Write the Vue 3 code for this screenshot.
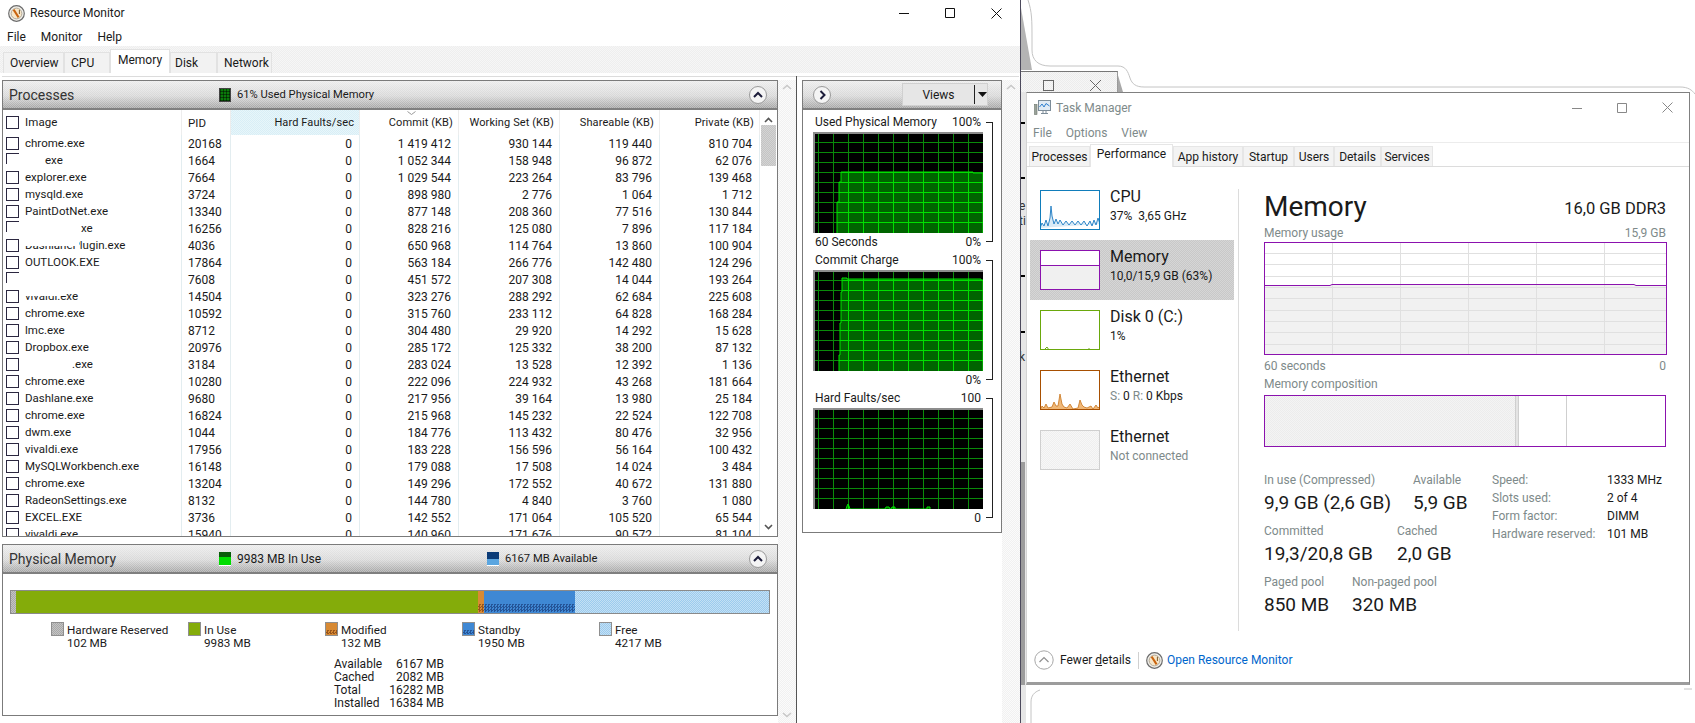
<script setup>
const rows = [
  ['chrome.exe', '20168', '1 419 412', '930 144', '119 440', '810 704'],
  ['exe', '1664', '1 052 344', '158 948', '96 872', '62 076', 20, true],
  ['explorer.exe', '7664', '1 029 544', '223 264', '83 796', '139 468'],
  ['mysqld.exe', '3724', '898 980', '2 776', '1 064', '1 712'],
  ['PaintDotNet.exe', '13340', '877 148', '208 360', '77 516', '130 844'],
  ['xe', '16256', '828 216', '125 080', '7 896', '117 184', 56, true],
  ['DashlanePlugin.exe', '4036', '650 968', '114 764', '13 860', '100 904', 0, false, 'mask-top'],
  ['OUTLOOK.EXE', '17864', '563 184', '266 776', '142 480', '124 296'],
  ['', '7608', '451 572', '207 308', '14 044', '193 264', 0, true],
  ['vivaldi.exe', '14504', '323 276', '288 292', '62 684', '225 608', 0, false, 'mask-top short'],
  ['chrome.exe', '10592', '315 760', '233 112', '64 828', '168 284'],
  ['lmc.exe', '8712', '304 480', '29 920', '14 292', '15 628'],
  ['Dropbox.exe', '20976', '285 172', '125 332', '38 200', '87 132', 0, false, 'mask-bottom'],
  ['.exe', '3184', '283 024', '13 528', '12 392', '1 136', 47],
  ['chrome.exe', '10280', '222 096', '224 932', '43 268', '181 664'],
  ['Dashlane.exe', '9680', '217 956', '39 164', '13 980', '25 184'],
  ['chrome.exe', '16824', '215 968', '145 232', '22 524', '122 708'],
  ['dwm.exe', '1044', '184 776', '113 432', '80 476', '32 956'],
  ['vivaldi.exe', '17956', '183 228', '156 596', '56 164', '100 432'],
  ['MySQLWorkbench.exe', '16148', '179 088', '17 508', '14 024', '3 484'],
  ['chrome.exe', '13204', '149 296', '172 552', '40 672', '131 880'],
  ['RadeonSettings.exe', '8132', '144 780', '4 840', '3 760', '1 080'],
  ['EXCEL.EXE', '3736', '142 552', '171 064', '105 520', '65 544'],
  ['vivaldi.exe', '15940', '140 960', '171 676', '90 572', '81 104']
]

const barParts = [
  { cls: 'seg-hw', w: 5 },
  { cls: 'seg-use', w: 462 },
  { cls: 'seg-mod', w: 6 },
  { cls: 'seg-stby', w: 90.5 },
  { cls: 'seg-free', w: 194.5 }
]

const legend = [
  { cls: 'seg-hw', name: 'Hardware Reserved', val: '102 MB' },
  { cls: 'seg-use', name: 'In Use', val: '9983 MB' },
  { cls: 'seg-mod', name: 'Modified', val: '132 MB' },
  { cls: 'seg-stby', name: 'Standby', val: '1950 MB' },
  { cls: 'seg-free', name: 'Free', val: '4217 MB' }
]

const memTotals = [
  ['Available', '6167 MB'],
  ['Cached', '2082 MB'],
  ['Total', '16282 MB'],
  ['Installed', '16384 MB']
]

const graphs = [
  { id: 'g1', title: 'Used Physical Memory', top: '100%', left: '60 Seconds', bottom: '0%',
    shape: '24,101 24,70 26,70 26,50 28,50 28,40 160,40 160,41 170,41 170,101' },
  { id: 'g2', title: 'Commit Charge', top: '100%', left: '', bottom: '0%',
    shape: '26,101 26,85 27,85 27,53 28,53 28,22 29,22 29,8 34,8 34,9 168,9 168,10 170,10 170,101' },
  { id: 'g3', title: 'Hard Faults/sec', top: '100', left: '', bottom: '0',
    shape: '33,101 34,98 35,96 36,98 37,101 72,101 73,99 76,99 77,101 78,101 79,99 82,99 82,101 114,101 114,99 117,99 117,101' }
]
const vLines = [5, 20, 35, 50, 65, 80, 95, 110, 125, 140, 155]
const hLines = [10, 20, 30, 40, 50, 60, 70, 80, 90]

const sidebar = [
  { name: 'CPU', sub: '37%  3,65 GHz', kind: 'cpu' },
  { name: 'Memory', sub: '10,0/15,9 GB (63%)', kind: 'mem', active: true },
  { name: 'Disk 0 (C:)', sub: '1%', kind: 'disk' },
  { name: 'Ethernet', sub: '', kind: 'net' },
  { name: 'Ethernet', sub: 'Not connected', kind: 'off', muted: true }
]
const cpuLine = '0,38 2,33 4,36 6,30 8,36 10,28 11,16 12,26 14,34 16,29 18,34 20,30 23,35 26,31 29,35 32,31 35,35 38,31 41,35 44,31 47,36 50,31 52,36 54,30 56,35 58,28 60,34'
const netLine = '0,40 2,36 4,38 6,34 8,38 12,37 14,32 16,36 18,36 20,24 22,34 24,37 27,38 30,34 33,39 38,38 40,30 42,35 44,37 47,38 51,36 53,39 56,35 58,38 60,36 60,40'
const tmV = [68, 136, 204, 272, 340]
const tmH = [11, 22, 34, 45, 56, 68, 79, 90, 102]

const stats = [
  [{ c: 'w149', k: 'In use (Compressed)', v: '9,9 GB (2,6 GB)' }, { c: '', k: 'Available', v: '5,9 GB' }],
  [{ c: 'w133', k: 'Committed', v: '19,3/20,8 GB' }, { c: '', k: 'Cached', v: '2,0 GB' }],
  [{ c: 'w88', k: 'Paged pool', v: '850 MB' }, { c: '', k: 'Non-paged pool', v: '320 MB' }]
]
const specs = [
  ['Speed:', '1333 MHz'],
  ['Slots used:', '2 of 4'],
  ['Form factor:', 'DIMM'],
  ['Hardware reserved:', '101 MB']
]
</script>

<template>
  <div class="desk">
    <!-- windows lying behind the two main ones -->
    <svg class="behind" width="675" height="723" viewBox="0 0 675 723" fill="none" stroke="#c4c4c4">
      <path d="M1 8 L12 70 L1 70Z" fill="#b4b4b4" stroke="none" />
      <path d="M97 72 L103 92 L97 92Z" fill="#a8a8a8" stroke="none" />
      <path d="M8 0 C12 12 12 20 12 40 L12 50 C12 60 18 66 30 66 L98 66 C106 66 108 72 110 78 C112 84 116 87 124 87 L660 87 C668 87 672 90 675 94" />
      <path d="M11 723 L11 702 C11 696 14 692 20 690" />
      <path d="M664 689 L672 689" />
    </svg>
    <div class="back-win">
      <span class="back-max"></span>
      <svg width="11" height="11" viewBox="0 0 11 11" stroke="#666" fill="none"><path d="M0 0 11 11M11 0 0 11" /></svg>
    </div>
    <div class="edge">
      <i class="tick t1"></i><i class="tick t2"></i><i class="tick t3"></i><i class="tick t4"></i>
      <span class="ch c1">e</span><span class="ch c2">ti</span><span class="ch c3">k</span>
      <div class="edge-low"></div>
    </div>

    <!-- Resource Monitor -->
    <section class="rm">
      <header class="rm-title">
        <svg class="rm-icon" width="17" height="17" viewBox="0 0 17 17">
          <circle cx="8.5" cy="8.5" r="7.8" fill="#f3f1ec" stroke="#6c6c6c" stroke-width="1.2" />
          <circle cx="8.5" cy="8.5" r="5.4" fill="#f7e6c8" stroke="#b0a898" />
          <path d="M5.6 4.6 10.6 12.4" stroke="#c9630e" stroke-width="2" />
          <path d="M11.4 4.8V9" stroke="#7d5a2a" />
        </svg>
        <span>Resource Monitor</span>
        <div class="win-btns">
          <svg width="10" height="10" viewBox="0 0 10 10" stroke="#111"><path d="M0 5.5H10" /></svg>
          <svg width="10" height="10" viewBox="0 0 10 10" stroke="#111" fill="none"><path d="M.5.5h9v9h-9z" /></svg>
          <svg width="11" height="11" viewBox="0 0 11 11" stroke="#111"><path d="M.5.5 10.5 10.5M10.5.5.5 10.5" /></svg>
        </div>
      </header>
      <nav class="rm-menu">
        <span>File</span><span>Monitor</span><span>Help</span>
      </nav>
      <div class="rm-tabs">
        <span class="rt t-over">Overview</span>
        <span class="rt t-cpu">CPU</span>
        <span class="rt t-mem">Memory</span>
        <span class="rt t-disk">Disk</span>
        <span class="rt t-net">Network</span>
      </div>
      <div class="rm-gap"></div>

      <div class="rm-body">
        <div class="left-col">
          <div class="panel proc">
            <div class="ph">
              <span class="ph-title">Processes</span>
              <i class="chip chip-dark"></i>
              <span class="ph-note">61% Used Physical Memory</span>
              <span class="roundbtn"><svg width="10" height="7" viewBox="0 0 10 7" fill="none" stroke="#1c1c3a" stroke-width="2"><path d="M1 6 5 2 9 6" /></svg></span>
            </div>
            <div class="proc-wrap">
              <div class="proc-table">
                <div class="pr head">
                  <div class="c-img"><i class="cb"></i><span>Image</span></div>
                  <div class="c-pid">PID</div>
                  <div class="c-num c-hf">Hard Faults/sec</div>
                  <div class="c-num c-sort">Commit (KB)<svg class="sort" width="9" height="4" viewBox="0 0 9 4" fill="none" stroke="#999"><path d="M.5.5 4.5 3.5 8.5.5" /></svg></div>
                  <div class="c-num">Working Set (KB)</div>
                  <div class="c-num">Shareable (KB)</div>
                  <div class="c-num">Private (KB)</div>
                </div>
                <div v-for="(r, i) in rows" :key="i" class="pr">
                  <div class="c-img">
                    <i class="cb" :class="{ cut: r[7] }"></i>
                    <span :style="{ paddingLeft: (r[6] || 0) + 'px' }">{{ r[0] }}</span>
                    <i v-if="r[8]" class="mask" :class="r[8]"></i>
                  </div>
                  <div class="c-pid">{{ r[1] }}</div>
                  <div class="c-num c-val">0</div>
                  <div class="c-num c-val">{{ r[2] }}</div>
                  <div class="c-num c-val">{{ r[3] }}</div>
                  <div class="c-num c-val">{{ r[4] }}</div>
                  <div class="c-num c-val">{{ r[5] }}</div>
                </div>
              </div>
              <div class="sb">
                <svg width="9" height="6" viewBox="0 0 9 6" fill="none" stroke="#555" stroke-width="1.6"><path d="M1 5 4.5 1.5 8 5" /></svg>
                <div class="sb-thumb"></div>
                <svg class="sb-down" width="9" height="6" viewBox="0 0 9 6" fill="none" stroke="#555" stroke-width="1.6"><path d="M1 1 4.5 4.5 8 1" /></svg>
              </div>
            </div>
          </div>

          <div class="panel phys">
            <div class="ph">
              <span class="ph-title">Physical Memory</span>
              <i class="chip chip-use"></i>
              <span class="ph-note n-use">9983 MB In Use</span>
              <i class="chip chip-avail"></i>
              <span class="ph-note">6167 MB Available</span>
              <span class="roundbtn"><svg width="10" height="7" viewBox="0 0 10 7" fill="none" stroke="#1c1c3a" stroke-width="2"><path d="M1 6 5 2 9 6" /></svg></span>
            </div>
            <div class="mbar">
              <div v-for="p in barParts" :key="p.cls" :class="p.cls" :style="{ width: p.w + 'px' }"></div>
            </div>
            <div class="mlegend">
              <div v-for="l in legend" :key="l.name" class="leg">
                <i class="swatch" :class="l.cls"></i>
                <div class="leg-text"><div>{{ l.name }}</div><div>{{ l.val }}</div></div>
              </div>
            </div>
            <div class="mtotals">
              <template v-for="t in memTotals" :key="t[0]">
                <span>{{ t[0] }}</span><span class="tv">{{ t[1] }}</span>
              </template>
            </div>
          </div>
        </div>

        <div class="vscroll">
          <svg width="10" height="6" viewBox="0 0 10 6" fill="none" stroke="#c8c8c8" stroke-width="1.6"><path d="M1 5 5 1.5 9 5" /></svg>
          <svg class="vs-down" width="10" height="6" viewBox="0 0 10 6" fill="none" stroke="#c8c8c8" stroke-width="1.6"><path d="M1 1 5 4.5 9 1" /></svg>
        </div>
        <div class="splitter"></div>

        <div class="right-col">
          <div class="panel graphs">
            <div class="ph ph-right">
              <span class="roundbtn rb-left"><svg width="7" height="10" viewBox="0 0 7 10" fill="none" stroke="#1c1c3a" stroke-width="2"><path d="M1.5 1 5.5 5 1.5 9" /></svg></span>
              <div class="views">
                <span class="views-text">Views</span>
                <i class="views-sep"></i>
                <svg width="9" height="5" viewBox="0 0 9 5" fill="#111"><path d="M0 0H9L4.5 5Z" /></svg>
              </div>
            </div>
            <div class="graph-list">
              <div v-for="g in graphs" :key="g.id" class="gsec">
                <div class="gcol">
                  <div class="gline"><span>{{ g.title }}</span><span>{{ g.top }}</span></div>
                  <svg class="plot" width="170" height="101" viewBox="0 0 170 101">
                    <defs>
                      <clipPath :id="g.id"><polygon :points="g.shape" /></clipPath>
                    </defs>
                    <rect width="170" height="101" fill="#000" />
                    <g stroke="#0a8a0a">
                      <path v-for="x in vLines" :key="x" :d="`M${x + 0.5} 0V101`" />
                      <path v-for="y in hLines" :key="y" :d="`M0 ${y + 0.5}H170`" />
                    </g>
                    <polygon :points="g.shape" fill="#006400" />
                    <g stroke="#00e000" :clip-path="`url(#${g.id})`">
                      <path v-for="x in vLines" :key="x" :d="`M${x + 0.5} 0V101`" />
                      <path v-for="y in hLines" :key="y" :d="`M0 ${y + 0.5}H170`" />
                    </g>
                    <polyline :points="g.shape" fill="none" stroke="#00e000" />
                    <path d="M1 101V1H170" fill="none" stroke="#8c8c8c" stroke-width="2" />
                  </svg>
                  <div class="gline"><span>{{ g.left }}</span><span>{{ g.bottom }}</span></div>
                </div>
                <i class="bracket"></i>
              </div>
            </div>
          </div>
        </div>
        <div class="vscroll narrow">
          <svg width="10" height="6" viewBox="0 0 10 6" fill="none" stroke="#c8c8c8" stroke-width="1.6"><path d="M1 5 5 1.5 9 5" /></svg>
        </div>
      </div>
    </section>

    <!-- Task Manager -->
    <section class="tm">
      <header class="tm-title">
        <svg width="17" height="16" viewBox="0 0 17 16">
          <rect x="4.5" y=".5" width="12" height="10" fill="#dfeaf4" stroke="#7c8c98" />
          <path d="M5.5 7 8 4 10 7 12 3.5 15.5 6" fill="none" stroke="#2d7fd0" />
          <rect x=".5" y="4.5" width="2.5" height="10" fill="#9aa39a" stroke="#6b746b" stroke-width=".6" />
          <path d="M7 13.5H14M9 11V13.5M12 11V13.5" stroke="#7c8c98" />
        </svg>
        <span>Task Manager</span>
        <div class="win-btns tm-btns">
          <svg width="10" height="10" viewBox="0 0 10 10" stroke="#888"><path d="M0 5.5H10" /></svg>
          <svg width="10" height="10" viewBox="0 0 10 10" stroke="#888" fill="none"><path d="M.5.5h9v9h-9z" /></svg>
          <svg width="11" height="11" viewBox="0 0 11 11" stroke="#888"><path d="M.5.5 10.5 10.5M10.5.5.5 10.5" /></svg>
        </div>
      </header>
      <nav class="tm-menu"><span>File</span><span>Options</span><span>View</span></nav>
      <div class="tm-tabs">
        <span class="tt">Processes</span>
        <span class="tt tt-on">Performance</span>
        <span class="tt">App history</span>
        <span class="tt">Startup</span>
        <span class="tt">Users</span>
        <span class="tt">Details</span>
        <span class="tt">Services</span>
      </div>

      <div class="tm-body">
        <aside class="side">
          <div v-for="(s, i) in sidebar" :key="i" class="side-item" :class="{ on: s.active }">
            <svg class="thumb" :class="'th-' + s.kind" width="60" height="40" viewBox="0 0 60 40">
              <polyline v-if="s.kind === 'cpu'" :points="cpuLine" fill="#d9eaf6" stroke="#2f86c8" />
              <g v-if="s.kind === 'mem'">
                <rect y="15" width="60" height="25" fill="#f0f0f0" />
                <path d="M0 15.5H60" stroke="#8b12ae" />
              </g>
              <path v-if="s.kind === 'disk'" d="M4 40 7 37 9 40M48 39H50" stroke="#6aa820" fill="none" />
              <polygon v-if="s.kind === 'net'" :points="netLine" fill="#f0b878" stroke="#c8741c" stroke-width=".8" />
            </svg>
            <div class="side-text" :class="{ muted: s.muted }">
              <div class="side-name">{{ s.name }}</div>
              <div v-if="s.kind === 'net'" class="side-sub">
                <span class="lbl">S:</span> 0 <span class="lbl">R:</span> 0 Kbps
              </div>
              <div v-else class="side-sub">{{ s.sub }}</div>
            </div>
          </div>
        </aside>

        <div class="tm-main">
          <div class="mhead"><h1>Memory</h1><span class="mtype">16,0 GB DDR3</span></div>
          <div class="caption"><span>Memory usage</span><span>15,9 GB</span></div>
          <svg class="usage" width="403" height="113" viewBox="0 0 403 113">
            <rect width="403" height="113" fill="#fff" />
            <rect y="43" width="403" height="70" fill="#f1f1f1" />
            <g stroke="#e0e0e0">
              <path v-for="x in tmV" :key="x" :d="`M${x + 0.5} 0V113`" />
              <path v-for="y in tmH" :key="y" :d="`M0 ${y + 0.5}H403`" />
            </g>
            <path d="M0 43.5H66L68 42.5H370L372 43.5H403" fill="none" stroke="#8b12ae" />
            <rect x=".5" y=".5" width="402" height="112" fill="none" stroke="#8b12ae" />
          </svg>
          <div class="caption cap-under"><span>60 seconds</span><span>0</span></div>
          <div class="caption cap-comp"><span>Memory composition</span></div>
          <div class="comp">
            <div class="comp-use"></div>
            <div class="comp-mod"></div>
            <div class="comp-stby"></div>
            <div class="comp-free"></div>
          </div>

          <div class="stats">
            <div class="stat-left">
              <div v-for="(row, i) in stats" :key="i" class="stat-row">
                <div v-for="st in row" :key="st.k" class="stat" :class="st.c">
                  <div class="stat-k">{{ st.k }}</div>
                  <div class="stat-v">{{ st.v }}</div>
                </div>
              </div>
            </div>
            <div class="spec">
              <template v-for="sp in specs" :key="sp[0]">
                <span class="stat-k">{{ sp[0] }}</span><span>{{ sp[1] }}</span>
              </template>
            </div>
          </div>
        </div>
      </div>

      <footer class="tm-foot">
        <svg width="20" height="20" viewBox="0 0 20 20" fill="none">
          <circle cx="10" cy="10" r="9.2" fill="#fff" stroke="#a8a8a8" />
          <path d="M5.5 12 10 7.5 14.5 12" stroke="#909090" stroke-width="1.2" />
        </svg>
        <span class="fewer">Fewer <u>d</u>etails</span>
        <i class="foot-sep"></i>
        <svg width="17" height="17" viewBox="0 0 17 17">
          <circle cx="8.5" cy="8.5" r="7.8" fill="#f3f1ec" stroke="#6c6c6c" stroke-width="1.2" />
          <circle cx="8.5" cy="8.5" r="5.4" fill="#f7e6c8" stroke="#b0a898" />
          <path d="M5.6 4.6 10.6 12.4" stroke="#c9630e" stroke-width="2" />
          <path d="M11.4 4.8V9" stroke="#7d5a2a" />
        </svg>
        <a class="open-link">Open Resource Monitor</a>
      </footer>
    </section>
  </div>
</template>

<style>
html, body { margin: 0; background: #fff; }
</style>

<style scoped>
.desk {
  position: relative;
  width: 1695px;
  height: 723px;
  overflow: hidden;
  background: #fff;
  font-family: Roboto, "Open Sans", sans-serif;
  font-size: 12px;
  color: #1a1a1a;
}
.behind { position: absolute; left: 1020px; top: 0; }
.back-win {
  position: absolute;
  left: 1021px;
  top: 71px;
  width: 97px;
  height: 21px;
  box-sizing: border-box;
  border-top: 1px solid #777;
  border-right: 1px solid #9a9a9a;
  background: repeating-conic-gradient(#ececec 0 25%, #f6f6f6 0 50%) 0 0 / 2px 2px;
  display: flex;
  align-items: flex-end;
  gap: 36px;
  padding: 0 0 1px 22px;
}
.back-max { width: 9px; height: 9px; border: 1px solid #666; }
.edge {
  position: absolute;
  left: 1021px;
  top: 92px;
  width: 5px;
  height: 631px;
  background: #e6e6e6;
  box-sizing: border-box;
  overflow: hidden;
}
.edge-low { position: absolute; left: 0; top: 370px; width: 4px; height: 223px; background: #9c9c9c; }
.tick { position: absolute; left: 0; width: 4px; height: 2px; background: #000; }
.t1 { top: 30px; } .t2 { top: 85px; } .t3 { top: 183px; } .t4 { top: 239px; }
.ch { position: absolute; left: -2px; font-size: 12px; line-height: 14px; color: #333; }
.c1 { top: 107px; } .c2 { top: 122px; } .c3 { top: 258px; }

/* Resource Monitor */
.rm {
  position: absolute;
  left: 0;
  top: 0;
  width: 1021px;
  height: 723px;
  box-sizing: border-box;
  border-right: 1px solid #4c4a5c;
  display: flex;
  flex-direction: column;
  background: #fff;
}
.rm-title { height: 26px; display: flex; align-items: center; gap: 5px; padding-left: 8px; }
.win-btns {
  margin-left: auto;
  display: flex;
  align-items: center;
  gap: 36px;
  padding-right: 18px;
}
.rm-menu { height: 20px; box-sizing: border-box; display: flex; align-items: center; gap: 15px; padding: 1px 0 0 7px; }
.rm-tabs {
  height: 27px;
  box-sizing: border-box;
  display: flex;
  align-items: flex-end;
  padding-left: 3px;
  background: repeating-conic-gradient(#eeeeee 0 25%, #f6f6f6 0 50%) 0 0 / 2px 2px;
}
.rt {
  height: 21px;
  box-sizing: border-box;
  display: flex;
  align-items: center;
  padding-left: 6px;
  padding-bottom: 1px;
  background: #f2f2f2;
  border: 1px solid #e2e2e2;
  border-bottom: 0;
}
.t-over { width: 61px; }
.t-cpu { width: 46px; padding-left: 6px; }
.t-mem { width: 60px; height: 24px; background: #fff; padding: 0 0 3px 7px; }
.t-disk { width: 47px; padding-left: 4px; }
.t-net { width: 55px; padding-left: 6px; }
.rm-gap { height: 3px; border-bottom: 1px solid #dcdcdc; margin: 0 0 3px 2px; width: 1017px; }
.rm-body { flex: 1; display: flex; min-height: 0; }
.left-col { width: 776px; margin-left: 2px; display: flex; flex-direction: column; gap: 7px; }
.panel { border: 1px solid #7b7b7b; box-sizing: border-box; background: #fff; }
.proc { height: 457px; display: flex; flex-direction: column; }
.phys { height: 172px; }
.ph {
  height: 29px;
  box-sizing: border-box;
  flex-shrink: 0;
  display: flex;
  align-items: center;
  padding-left: 6px;
  border-bottom: 2px solid #7f7f7f;
  background-color: #d6d6d6;
  background-image:
    repeating-conic-gradient(rgba(255, 255, 255, .28) 0 25%, transparent 0 50%),
    linear-gradient(#ececec, #d8d8d8 55%, #a4a4a4);
  background-size: 2px 2px, 100% 100%;
}
.ph-title { font-size: 14px; width: 210px; color: #333; }
.ph-note { margin-left: 6px; font-size: 11.2px; }
.n-use { width: 250px; font-size: 12px; }
.chip { width: 12px; height: 14px; box-sizing: border-box; border: 1px solid #444; flex-shrink: 0; }
.chip-dark {
  background:
    repeating-linear-gradient(90deg, rgba(0, 0, 0, .45) 0 1px, transparent 1px 3px),
    repeating-linear-gradient(0deg, rgba(0, 0, 0, .45) 0 1px, transparent 1px 3px),
    #0a7a0a;
}
.chip-use {
  border: 0;
  background: linear-gradient(#0a5a0a 0 5px, #00dd00 5px 13px, #fff 13px);
}
.chip-avail {
  border: 0;
  background: linear-gradient(#0c3c78 0 7px, #5ba6e0 7px 13px, #fff 13px);
}
.roundbtn {
  margin-left: auto;
  margin-right: 10px;
  width: 18px;
  height: 18px;
  box-sizing: border-box;
  border: 1px solid #9a9a9a;
  border-radius: 50%;
  background: #f4f4f4;
  display: flex;
  align-items: center;
  justify-content: center;
}
.proc-wrap { flex: 1; min-height: 0; display: flex; overflow: hidden; }
.proc-table { width: 757px; }
.pr {
  display: grid;
  grid-template-columns: 179px 49px 129px 99px 101px 100px 100px;
  height: 17px;
  line-height: 18px;
  white-space: nowrap;
}
.pr > div { border-right: 1px solid #e3edf0; box-sizing: border-box; overflow: hidden; }
.pr.head { height: 24.5px; line-height: 26px; font-size: 11px; letter-spacing: .1px; }
.pr.head .c-img, .pr.head .c-pid { font-size: 11.5px; }
.pr.head > div { border-right-color: #ededed; }
.c-img { display: flex; align-items: center; padding-left: 3px; position: relative; font-size: 11.5px; }
.c-pid { padding-left: 6px; }
.c-num { text-align: right; padding-right: 5px; }
.c-val { padding-right: 7px; }
.c-hf {
  background: repeating-conic-gradient(#d8eef6 0 25%, #e8f6fa 0 50%) 0 0 / 2px 2px;
}
.c-sort { position: relative; }
.sort { position: absolute; left: 47px; top: 1px; }
.cb {
  width: 13px;
  height: 13px;
  box-sizing: border-box;
  border: 1px solid #2b2740;
  flex-shrink: 0;
  margin-right: 6px;
}
.cut { border-right: 0; border-bottom: 0; height: 11px; margin-top: -4px; }
/* white retouching over part of a process name */
.mask { position: absolute; left: 21px; width: 55px; background: #fff; }
.mask-top { top: 0; height: 9px; }
.mask-top.short { width: 42px; height: 8px; }
.mask-bottom { bottom: 0; height: 4px; width: 40px; }
.sb {
  width: 17px;
  flex-shrink: 0;
  display: flex;
  flex-direction: column;
  align-items: center;
  padding-top: 7px;
  box-sizing: border-box;
}
.sb-thumb {
  width: 15px;
  height: 41px;
  margin-top: 2px;
  background: repeating-conic-gradient(#c4c4c4 0 25%, #d4d4d4 0 50%) 0 0 / 2px 2px;
}
.sb-down { margin-top: auto; margin-bottom: 6px; }
.mbar {
  display: flex;
  width: 760px;
  height: 24px;
  box-sizing: border-box;
  margin: 16px 0 0 7px;
  border: 1px solid #8a8a8a;
}
.seg-hw { background: repeating-conic-gradient(#a8a8a8 0 25%, #c4c4c4 0 50%) 0 0 / 2px 2px; }
.seg-use { background: #84ac0a; }
.seg-mod, .seg-stby { position: relative; }
.seg-mod { background: #d88a34; }
.seg-stby { background: #3f88d4; }
.seg-mod::after, .seg-stby::after {
  content: "";
  position: absolute;
  left: 0;
  right: 0;
  bottom: 1px;
  height: 35%;
  background: repeating-conic-gradient(rgba(20, 50, 110, .6) 0 25%, transparent 0 50%) 0 0 / 3px 3px;
}
.seg-mod::after { background: repeating-conic-gradient(rgba(110, 50, 10, .6) 0 25%, transparent 0 50%) 0 0 / 3px 3px; }
.seg-free { background: repeating-conic-gradient(#9ccbee 0 25%, #c4e0f4 0 50%) 0 0 / 2px 2px; }
.mlegend {
  display: grid;
  grid-template-columns: repeat(5, 137px);
  margin: 8px 0 0 48px;
}
.leg { display: flex; gap: 3px; line-height: 13px; }
.leg-text { padding-top: 2px; font-size: 11.7px; }
.swatch { width: 13px; height: 14px; box-sizing: border-box; border: 1px solid #8f8f8f; flex-shrink: 0; }
.mtotals {
  display: grid;
  grid-template-columns: auto auto;
  justify-content: space-between;
  width: 110px;
  margin: 8px 0 0 331px;
  line-height: 13px;
}
.tv { text-align: right; }
.vscroll {
  width: 18px;
  flex-shrink: 0;
  display: flex;
  flex-direction: column;
  align-items: center;
  padding-top: 4px;
  box-sizing: border-box;
  background: repeating-conic-gradient(#f1f1f1 0 25%, #fbfbfb 0 50%) 0 0 / 2px 2px;
}
.vs-down { margin-top: auto; margin-bottom: 5px; }
.splitter { width: 6px; flex-shrink: 0; border-left: 1px solid #555; box-sizing: border-box; margin-top: -4px; }
.right-col { width: 200px; flex-shrink: 0; }
.graphs { height: 453px; display: flex; flex-direction: column; }
.ph-right { padding-left: 10px; }
.rb-left { margin: 0; }
.views {
  margin-left: auto;
  margin-right: 13px;
  width: 86px;
  height: 23px;
  box-sizing: border-box;
  background: #e6e6e6;
  border: 1px solid #d0d0d0;
  display: flex;
  align-items: center;
}
.views-text { width: 71px; text-align: center; }
.views-sep { width: 1px; height: 19px; background: #222; margin-right: 3px; }
.graph-list { padding: 3px 0 0 10px; }
.gsec { display: flex; }
.gcol { width: 170px; }
.gline { height: 18.5px; line-height: 19.5px; display: flex; justify-content: space-between; padding: 0 2px; white-space: nowrap; }
.plot { display: block; }
.bracket {
  width: 6px;
  margin: 9px 0 9px 3px;
  border: solid #222;
  border-width: 1px 1px 1px 0;
}

/* Task Manager */
.tm {
  position: absolute;
  left: 1026px;
  top: 92px;
  width: 664px;
  height: 593px;
  box-sizing: border-box;
  display: flex;
  flex-direction: column;
  background: #fff;
  border: 1px solid #808080;
  border-left-color: #d4d4d4;
  border-bottom: 3px solid #9c9c9c;
}
.tm-title { height: 30px; display: flex; align-items: center; gap: 5px; padding: 0 0 1px 7px; box-sizing: border-box; color: #7e8a8a; }
.tm-btns { gap: 35px; padding-right: 16px; }
.tm-menu { height: 19px; display: flex; align-items: center; gap: 14px; padding-left: 6px; color: #7e8a8a; }
.tm-tabs {
  height: 25px;
  box-sizing: border-box;
  display: flex;
  align-items: flex-end;
  padding-left: 2px;
  border-top: 1px solid #ececec;
  border-bottom: 1px solid #dcdcdc;
}
.tt {
  height: 20px;
  box-sizing: border-box;
  display: flex;
  align-items: center;
  justify-content: center;
  background: #f3f3f3;
  border: 1px solid #e6e6e6;
  border-bottom: 0;
  white-space: nowrap;
}
.tt:nth-child(1) { width: 61px; }
.tt:nth-child(2) { width: 83px; }
.tt:nth-child(3) { width: 70px; }
.tt:nth-child(4) { width: 51px; }
.tt:nth-child(5) { width: 40px; }
.tt:nth-child(6) { width: 47px; }
.tt:nth-child(7) { width: 52px; }
.tt-on { height: 23px; background: #fff; padding-bottom: 5px; margin-bottom: -1px; }
.tm-body { height: 465px; display: flex; }
.side { width: 208px; padding-top: 13px; box-sizing: border-box; margin-left: 3px; }
.side-item { height: 60px; display: flex; gap: 10px; padding: 10px 0 0 10px; box-sizing: border-box; width: 204px; }
.side-item.on { background: repeating-conic-gradient(#c8c8c8 0 25%, #d6d6d6 0 50%) 0 0 / 2px 2px; }
.thumb { box-sizing: border-box; background: #fff; display: block; flex-shrink: 0; overflow: hidden; }
.th-cpu { outline: 1px solid #117dbb; outline-offset: -1px; }
.th-mem { outline: 1px solid #8b12ae; outline-offset: -1px; }
.th-disk { outline: 1px solid #6aa80c; outline-offset: -1px; }
.th-net { outline: 1px solid #a74f01; outline-offset: -1px; }
.th-off { outline: 1px solid #cfcfcf; outline-offset: -1px; background: repeating-conic-gradient(#efefef 0 25%, #f7f7f7 0 50%) 0 0 / 2px 2px; }
.side-text { margin-top: -4px; line-height: 17px; }
.side-name { font-size: 16px; line-height: 22px; }
.side-sub { font-size: 12px; white-space: pre; }
.lbl, .muted .side-sub { color: #7e8a8a; }
.tm-main {
  margin-top: 22px;
  height: 442px;
  width: 428px;
  box-sizing: border-box;
  border-left: 1px solid #dcdcdc;
  padding-left: 25px;
}
.mhead { height: 38px; display: flex; justify-content: space-between; align-items: center; margin-top: -2px; }
.mhead h1 { margin: 0; font-size: 28px; font-weight: 400; }
.mtype { font-size: 16.5px; margin-top: 5px; }
.caption { display: flex; justify-content: space-between; height: 16px; line-height: 16px; color: #7e8a8a; }
.usage { display: block; margin-top: 1px; }
.cap-under { margin-top: 3px; }
.cap-comp { margin-top: 2px; margin-bottom: 3px; }
.comp {
  height: 52px;
  box-sizing: border-box;
  border: 1px solid #8b12ae;
  display: flex;
}
.comp-use { width: 250px; background: repeating-conic-gradient(#ececec 0 25%, #f4f4f4 0 50%) 0 0 / 2px 2px; border-right: 1px solid #cfcfcf; }
.comp-mod { width: 2px; background: #e4e4e4; border-right: 1px solid #cfcfcf; }
.comp-stby { width: 47px; border-right: 1px solid #cfcfcf; }
.comp-free { flex: 1; }
.stats { display: flex; margin-top: 24px; }
.stat-left { width: 228px; flex-shrink: 0; }
.stat-row { display: flex; height: 51px; }
.w149 { width: 149px; }
.w133 { width: 133px; }
.w88 { width: 88px; }
.stat-k { color: #7e8a8a; white-space: nowrap; }
.stat > .stat-k { line-height: 18px; }
.stat-v { font-size: 19px; line-height: 28px; white-space: nowrap; }
.spec {
  display: grid;
  grid-template-columns: 115px auto;
  grid-auto-rows: 18px;
  line-height: 18px;
}
.tm-foot {
  flex: 1;
  display: flex;
  align-items: center;
  padding: 6px 0 0 7px;
}
.fewer { margin-left: 6px; }
.foot-sep { width: 1px; height: 17px; background: #d0d0d0; margin: 0 7px; }
.open-link { margin-left: 4px; color: #0066cc; }
</style>
